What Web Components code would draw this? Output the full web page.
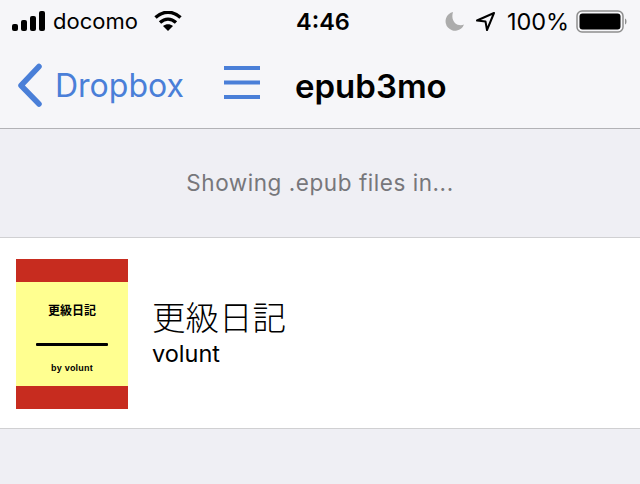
<!DOCTYPE html>
<html><head><meta charset="utf-8">
<style>
html,body{margin:0;padding:0;width:640px;height:484px;overflow:hidden;background:#efeff4;font-family:Inter,"Liberation Sans","Noto Sans CJK JP",sans-serif}
</style></head><body>
<app-header></app-header>
<section-note>Showing .epub files in...</section-note>
<book-row title-text="更級日記" author="volunt"></book-row>
<script>
function def(name,html){
  customElements.define(name,class extends HTMLElement{
    connectedCallback(){ if(this.shadowRoot) return; const r=this.attachShadow({mode:'open'}); r.innerHTML=typeof html==='function'?html(this):html; }
  });
}
def('status-bar',`<style>
:host{display:flex;align-items:center;height:42px;box-sizing:border-box;padding:0 10px 0 12px;color:#000;font-size:22px}
.l,.r{display:flex;align-items:center}
.l{width:279px;flex:none}
.t{font-weight:600;font-size:23.5px;flex:none;margin-left:5px}
.r{margin-left:auto}
svg{display:block;flex:none}
</style>
<div class="l">
<svg width="33" height="20" viewBox="0 0 33 20"><rect x="0" y="13" width="6" height="7" rx="2"/><rect x="9" y="9" width="6" height="11" rx="2"/><rect x="18" y="5" width="6" height="15" rx="2"/><rect x="27" y="0" width="6" height="20" rx="2"/></svg>
<span style="margin-left:8px">docomo</span>
<svg style="margin-left:16px" width="28" height="20" viewBox="0 0 28 20"><path d="M1.500 6.500C9 -.5 19 -.5 26.500 6.500" fill="none" stroke="#000" stroke-width="3.400"/><path d="M6 11.500C11 7 17 7 22 11.500" fill="none" stroke="#000" stroke-width="3.400"/><path d="M9 15L14 20L19 15C16 12.500 12 12.500 9 15Z"/></svg>
</div>
<span class="t">4:46</span>
<div class="r">
<svg width="20" height="20" viewBox="0 0 20 20"><path d="M8 1A9.500 9.500 0 1 0 19 13.500C13 16 5 11 8 1Z" fill="#acacac"/></svg>
<svg style="margin-left:10px" width="21" height="21" viewBox="0 0 21 21"><path d="M19 2L2 9.500L10.500 10.500L12 19Z" fill="none" stroke="#000" stroke-width="2" stroke-linejoin="round"/></svg>
<span style="margin-left:11px;font-size:23.500px;letter-spacing:-.1px">100%</span>
<svg style="margin-left:7px" width="54" height="23" viewBox="0 0 54 23"><rect x="1" y="1" width="46" height="21" rx="5" fill="none" stroke="#8e8e8e" stroke-width="1.500"/><rect x="3.500" y="3.500" width="41" height="16" rx="3"/><path d="M49 8.500C51 9 51 14 49 14.500Z" fill="#8e8e8e"/></svg>
</div>`);
def('nav-bar',`<style>
:host{display:flex;align-items:center;height:86px;box-sizing:border-box;padding:0 0 0 17px}
.b{font-size:32px;color:#4a7fd8;margin-left:12px;width:169px;flex:none}
.tt{font-size:33px;font-weight:600;color:#000;margin-left:35px;margin-bottom:-1px}
svg{display:block;flex:none}
.h{margin-top:-5px}
</style>
<svg width="26" height="44" viewBox="0 0 26 44"><path d="M22 3.500L4 22.500L22 41" fill="none" stroke="#4a7fd8" stroke-width="5.500" stroke-linecap="round" stroke-linejoin="round"/></svg>
<span class="b">Dropbox</span>
<svg class="h" width="36" height="33" viewBox="0 0 36 33"><rect y="0" width="36" height="4" fill="#4a7fd8"/><rect y="14.500" width="36" height="4" fill="#4a7fd8"/><rect y="29" width="36" height="4" fill="#4a7fd8"/></svg>
<span class="tt">epub3mo</span>`);
def('app-header',`<style>
:host{display:block;background:#f6f6f9;border-bottom:1px solid #b2b2b6}
</style><status-bar></status-bar><nav-bar></nav-bar>`);
def('section-note',`<style>
:host{display:flex;align-items:center;justify-content:center;height:108px;color:#77777b;font-size:22.500px;letter-spacing:.55px;box-sizing:border-box;padding-bottom:2px}
</style><slot></slot>`);
def('book-cover',`<style>
:host{display:flex;flex-direction:column;width:112px;height:150px;flex:none;background:#ffff90;color:#000;font-family:"Liberation Sans","Noto Sans CJK JP",sans-serif;font-weight:700;align-items:center}
.band{height:23px;width:100%;background:#c72c1f;flex:none}
.t{font-size:12px;line-height:14px;margin-top:22px}
.rule{width:72px;height:3px;background:#000;margin-top:25px;border-radius:1px}
.by{font-size:9px;line-height:12px;margin-top:16px;letter-spacing:.2px}
.sp{flex:1}
</style><div class="band"></div><div class="t">更級日記</div><div class="rule"></div><div class="by">by volunt</div><div class="sp"></div><div class="band"></div>`);
def('book-row',h=>`<style>
:host{display:flex;align-items:center;height:192px;box-sizing:border-box;background:#fff;border-top:1px solid #d0d0d2;border-bottom:1px solid #d0d0d2;padding:2px 16px 0}
.c{margin-left:24px;display:flex;flex-direction:column;padding-bottom:4px;gap:6px}
.a{font-size:33.500px;line-height:38px;color:#000;font-family:"Noto Sans CJK JP",sans-serif;font-weight:300}
.b{font-size:23.500px;line-height:26px;color:#000}
</style><book-cover></book-cover><div class="c"><div class="a">${h.getAttribute('title-text')}</div><div class="b">${h.getAttribute('author')}</div></div>`);
</script>
</body></html>
